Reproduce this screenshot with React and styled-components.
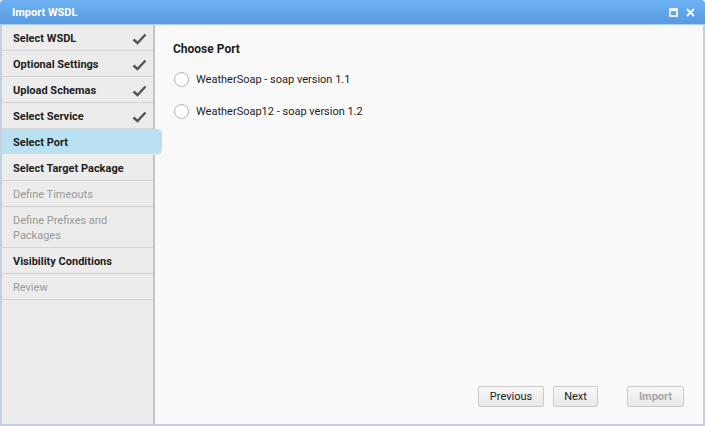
import React, { useState } from "react";
import styled, { createGlobalStyle } from "styled-components";

const Global = createGlobalStyle`
  html, body {
    margin: 0;
    padding: 0;
    background: #fff;
  }
  * {
    box-sizing: border-box;
  }
`;

const Window = styled.div`
  width: 705px;
  height: 426px;
  display: flex;
  flex-direction: column;
  background: #c5cfe2;
  border-radius: 4px 4px 0 0;
  overflow: hidden;
  font-family: Roboto, "Liberation Sans", sans-serif;
  font-size: 11px;
  color: #1e1e1e;
`;

const TitleBar = styled.div`
  height: 25px;
  flex: none;
  display: flex;
  align-items: center;
  padding: 1px 10px 0 12px;
  background: linear-gradient(#6db1f3, #5a9ae0);
  border-bottom: 1px solid #a9cdf3;
  color: #fff;
  font-weight: 700;
  font-size: 11px;
`;

const TitleText = styled.div`
  flex: 1;
`;

const TitleButtons = styled.div`
  display: flex;
  align-items: center;
  gap: 8px;
`;

const Body = styled.div`
  flex: 1;
  display: flex;
  margin: 0 2px 2px 2px;
  min-height: 0;
`;

const Sidebar = styled.div`
  width: 153px;
  flex: none;
  background: #ececec;
  border-right: 2px solid #c4c4c4;
  position: relative;
  z-index: 1;
`;

const Step = styled.div`
  display: flex;
  align-items: center;
  justify-content: space-between;
  padding: 6px 6px 4px 11px;
  line-height: 15px;
  min-height: 26px;
  border-bottom: 1px solid #d5d5d5;
  font-weight: ${(p) => (p.$enabled ? 700 : 400)};
  color: ${(p) => (p.$enabled ? "#1e1e1e" : "#9a9a9a")};
  ${(p) =>
    p.$active &&
    `
    background: #b9e1f2;
    margin-right: -9px;
    border-radius: 0 5px 5px 0;
    border-bottom-color: #ececec;
  `}
`;

const StepLabel = styled.span`
  max-width: ${(p) => (p.$wrap ? "110px" : "none")};
`;

const Main = styled.div`
  flex: 1;
  display: flex;
  flex-direction: column;
  background: #f9f9f9;
  padding: 16px 19px 17px 18px;
`;

const Heading = styled.div`
  font-weight: 700;
  font-size: 12px;
  line-height: 16px;
  margin-bottom: 13px;
`;

const Options = styled.div`
  display: flex;
  flex-direction: column;
  gap: 14px;
  flex: 1;
`;

const Option = styled.label`
  display: flex;
  align-items: center;
  gap: 7px;
  height: 18px;
  cursor: pointer;
`;

const Radio = styled.span`
  width: 15px;
  height: 15px;
  margin-left: 1px;
  border-radius: 50%;
  border: 1px solid #b0b0b0;
  background: #fff;
  display: flex;
  align-items: center;
  justify-content: center;
  &::after {
    content: "";
    width: 7px;
    height: 7px;
    border-radius: 50%;
    background: ${(p) => (p.$checked ? "#4a90d9" : "transparent")};
  }
`;

const Footer = styled.div`
  display: flex;
  justify-content: flex-end;
  align-items: center;
`;

const Button = styled.button`
  height: 21px;
  padding: 0;
  width: ${(p) => p.$w}px;
  margin-left: ${(p) => p.$gap || 0}px;
  font-family: Roboto, "Liberation Sans", sans-serif;
  font-size: 11px;
  font-weight: ${(p) => (p.disabled ? 700 : 400)};
  color: ${(p) => (p.disabled ? "#a8a8a8" : "#222")};
  background: linear-gradient(#f7f7f7, #e8e8e8);
  border: 1px solid #cbcbcb;
  border-radius: 2px;
  cursor: ${(p) => (p.disabled ? "default" : "pointer")};
`;

const Check = () => (
  <svg width="15" height="12" viewBox="0 0 15 12">
    <polyline
      points="1.5,6.5 5.5,10 13.5,1.5"
      fill="none"
      stroke="#555"
      strokeWidth="2.4"
    />
  </svg>
);

const steps = [
  { label: "Select WSDL", done: true, enabled: true },
  { label: "Optional Settings", done: true, enabled: true },
  { label: "Upload Schemas", done: true, enabled: true },
  { label: "Select Service", done: true, enabled: true },
  { label: "Select Port", enabled: true, active: true },
  { label: "Select Target Package", enabled: true },
  { label: "Define Timeouts" },
  { label: "Define Prefixes and Packages", wrap: true },
  { label: "Visibility Conditions", enabled: true },
  { label: "Review" },
];

const ports = [
  "WeatherSoap - soap version 1.1",
  "WeatherSoap12 - soap version 1.2",
];

export default function App() {
  const [port, setPort] = useState(null);

  return (
    <>
      <Global />
      <Window>
        <TitleBar>
          <TitleText>Import WSDL</TitleText>
          <TitleButtons>
            <svg width="9" height="9" viewBox="0 0 9 9">
              <rect x="1" y="1" width="7" height="7" fill="none" stroke="#fff" strokeWidth="1.6" />
              <rect x="1" y="1" width="7" height="2" fill="#fff" />
            </svg>
            <svg width="9" height="9" viewBox="0 0 9 9">
              <path d="M1 1 L8 8 M8 1 L1 8" stroke="#fff" strokeWidth="1.8" />
            </svg>
          </TitleButtons>
        </TitleBar>
        <Body>
          <Sidebar>
            {steps.map((s) => (
              <Step key={s.label} $enabled={s.enabled} $active={s.active}>
                <StepLabel $wrap={s.wrap}>{s.label}</StepLabel>
                {s.done && <Check />}
              </Step>
            ))}
          </Sidebar>
          <Main>
            <Heading>Choose Port</Heading>
            <Options>
              {ports.map((p) => (
                <Option key={p} onClick={() => setPort(p)}>
                  <Radio $checked={port === p} />
                  {p}
                </Option>
              ))}
            </Options>
            <Footer>
              <Button $w={66}>Previous</Button>
              <Button $w={45} $gap={9}>Next</Button>
              <Button $w={57} $gap={29} disabled>
                Import
              </Button>
            </Footer>
          </Main>
        </Body>
      </Window>
    </>
  );
}
